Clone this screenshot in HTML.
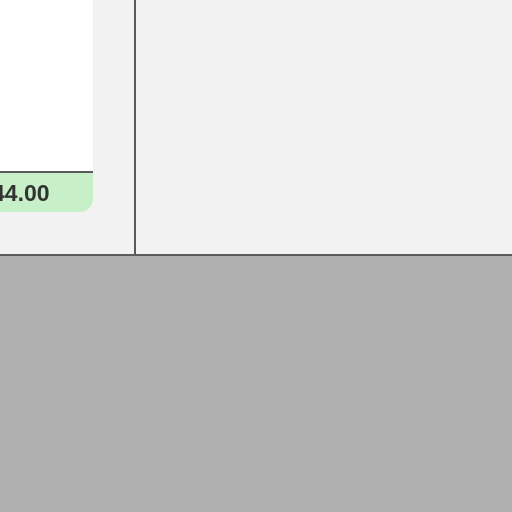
<!DOCTYPE html>
<html><head><style>
html,body{margin:0;padding:0;width:512px;height:512px;overflow:hidden;background:#f2f2f2;position:relative;font-family:"Liberation Sans",sans-serif}
.white{position:absolute;left:0;top:0;width:93px;height:171px;background:#fff;border-bottom:2px solid #5a5a5a}
.green{position:absolute;left:0;top:173px;width:93px;height:39px;background:#c8f0c8;border-bottom-right-radius:13px;overflow:hidden}
.green span{position:absolute;left:-8px;top:7px;font-size:23px;font-weight:bold;color:#333}
.vl{position:absolute;left:134px;top:0;width:2px;height:255px;background:#5a5a5a}
.hl{position:absolute;left:0;top:254px;width:512px;height:2px;background:#5a5a5a}
.gray{position:absolute;left:0;top:256px;width:512px;height:256px;background:#b0b0b0}
</style></head><body>
<div class="white"></div>
<div class="green"><span>44.00</span></div>
<div class="vl"></div>
<div class="hl"></div>
<div class="gray"></div>
</body></html>
